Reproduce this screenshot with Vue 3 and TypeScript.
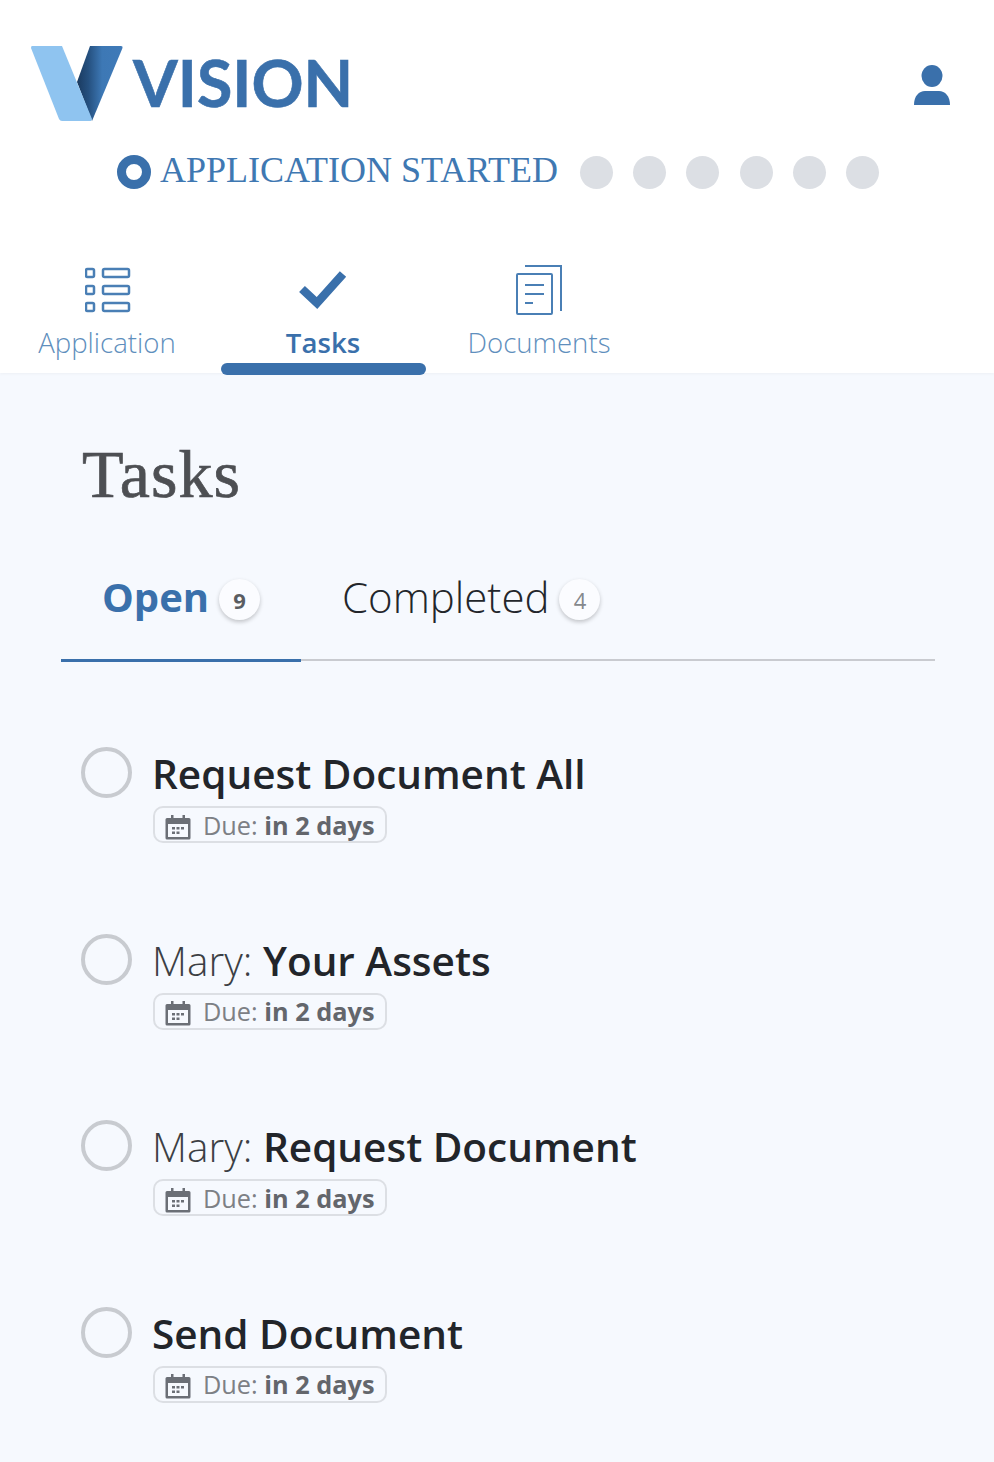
<script setup lang="ts">
interface Task {
  owner?: string
  title: string
}

const tasks: Task[] = [
  { title: 'Request Document All' },
  { owner: 'Mary', title: 'Your Assets' },
  { owner: 'Mary', title: 'Request Document' },
  { title: 'Send Document' },
]

const steps = [1, 2, 3, 4, 5, 6]
</script>

<template>
  <div class="page">
    <header class="top">
      <div class="brand-row">
        <div class="brand">
          <svg class="logo" viewBox="0 0 92 76" width="92" height="76">
            <defs>
              <linearGradient id="fold" x1="0" y1="0" x2="1" y2="0">
                <stop offset="0" stop-color="#1a3a5f" />
                <stop offset="0.25" stop-color="#25507f" />
                <stop offset="0.55" stop-color="#3d78b5" />
                <stop offset="1" stop-color="#3f7ab8" />
              </linearGradient>
            </defs>
            <path d="M59 0 H90 Q92 0 91.500 2 L61 75 L46 36 Z" fill="url(#fold)" />
            <path d="M1 0 H31 L61 73 L60 75 H31 Q29 75 28 73 L0 2 Q0 0 1 0 Z" fill="#8fc4f0" />
          </svg>
          <span class="wordmark">VISION</span>
        </div>
        <svg class="user" viewBox="0 0 36 40" width="36" height="40">
          <ellipse cx="18" cy="11" rx="10.500" ry="11" fill="#3a70ab" />
          <path d="M0 40 C0 31 5 26 11 26 H25 C31 26 36 31 36 40 Z" fill="#3a70ab" />
        </svg>
      </div>

      <div class="stepper">
        <span class="ring"></span>
        <span class="status">APPLICATION STARTED</span>
        <span v-for="s in steps" :key="s" class="dot"></span>
      </div>

      <nav class="nav">
        <a class="nav-item">
          <svg class="grid-icon" viewBox="0 0 46 46" width="46" height="46" fill="none" stroke="#4a7fb5" stroke-width="2.500">
            <rect x="1" y="2" width="8" height="8" rx="1.500" />
            <rect x="1" y="19" width="8" height="8" rx="1.500" />
            <rect x="1" y="36" width="8" height="8" rx="1.500" />
            <rect x="18" y="2" width="26" height="8" rx="1.500" />
            <rect x="18" y="19" width="26" height="8" rx="1.500" />
            <rect x="18" y="36" width="26" height="8" rx="1.500" />
          </svg>
          <span>Application</span>
        </a>
        <a class="nav-item active">
          <svg viewBox="0 0 48 40" width="48" height="40">
            <path d="M3 19 L18 33 L44 4" fill="none" stroke="#3a70ab" stroke-width="8.500" stroke-linejoin="miter" />
          </svg>
          <span>Tasks</span>
        </a>
        <a class="nav-item">
          <svg viewBox="0 0 46 50" width="46" height="50" fill="none" stroke="#4a7fb5" stroke-width="2">
            <path d="M9 1 H45 V46" />
            <rect x="1" y="9" width="35" height="40" rx="1" />
            <path d="M9 20 H28 M9 29 H28 M9 38 H17" />
          </svg>
          <span>Documents</span>
        </a>
      </nav>
    </header>

    <main class="panel">
      <h1 class="title">Tasks</h1>

      <div class="tabs">
        <div class="tab open">
          <span>Open</span>
          <span class="count strong">9</span>
        </div>
        <div class="tab">
          <span>Completed</span>
          <span class="count">4</span>
        </div>
      </div>

      <ul class="list">
        <li v-for="task in tasks" :key="task.title" class="task">
          <span class="check"></span>
          <div class="body">
            <div class="name">
              <span v-if="task.owner" class="owner">{{ task.owner }}: </span>{{ task.title }}
            </div>
            <div class="due">
              <svg viewBox="0 0 26 26" width="26" height="26" fill="#6b6f76">
                <path fill-rule="evenodd" d="M6 1 H8.500 V4 H17.500 V1 H20 V4 H24 Q25.500 4 25.500 5.500 V24 Q25.500 25.500 24 25.500 H2 Q0.500 25.500 0.500 24 V5.500 Q0.500 4 2 4 H6 Z M3 10 V23 H23 V10 Z" />
                <rect x="7" y="13" width="3" height="2.500" />
                <rect x="11.500" y="13" width="3" height="2.500" />
                <rect x="16" y="13" width="3" height="2.500" />
                <rect x="7" y="17.500" width="3" height="2.500" />
                <rect x="11.500" y="17.500" width="3" height="2.500" />
              </svg>
              <span>Due: <b>in 2 days</b></span>
            </div>
          </div>
        </li>
      </ul>
    </main>
  </div>
</template>

<style>
html,
body {
  margin: 0;
  background: #f6f9fe;
}
</style>

<style scoped>
.page {
  width: 994px;
  height: 1462px;
  overflow: hidden;
  font-family: 'Open Sans', 'Noto Sans', sans-serif;
  background: #f6f9fe;
}

.top {
  background: #fff;
  height: 373px;
  box-shadow: 0 1px 3px rgba(0, 0, 0, 0.04);
}

.brand-row {
  display: flex;
  justify-content: space-between;
  padding: 46px 44px 0 31px;
  height: 84px;
}

.brand {
  display: flex;
  align-items: flex-start;
}

.logo {
  display: block;
}

.wordmark {
  margin: 0 0 0 10px;
  font-family: Lato, sans-serif;
  font-weight: 700;
  font-size: 64.500px;
  line-height: 72px;
  color: #3a70ab;
  -webkit-text-stroke: 0.6px #3a70ab;
}

.user {
  margin-top: 19px;
}

.stepper {
  display: flex;
  align-items: center;
  margin-top: 25px;
  padding-left: 117px;
  height: 34px;
}

.ring {
  width: 34px;
  height: 34px;
  box-sizing: border-box;
  border: 9px solid #3a70ab;
  border-radius: 50%;
}

.status {
  margin: -4px 5px 0 9px;
  font-family: 'Liberation Serif', serif;
  font-size: 36px;
  line-height: 34px;
  color: #3f78b2;
  width: 415px;
  white-space: nowrap;
}

.dot {
  width: 33px;
  height: 33px;
  margin-right: 20.200px;
  border-radius: 50%;
  background: #dcdfe4;
}

.nav {
  display: grid;
  grid-template-columns: repeat(3, 216px);
  margin: 76px 0 0 -1px;
}

.nav-item {
  position: relative;
  display: flex;
  flex-direction: column;
  align-items: center;
  height: 108px;
  font-size: 27.600px;
  font-weight: 300;
  color: #5f8fbd;
}

.nav-item svg {
  height: 50px;
  display: block;
}

.nav-item .grid-icon {
  margin-left: 2px;
}

.nav-item span {
  margin-top: 9px;
  line-height: 37px;
}

.nav-item.active {
  color: #3a70ab;
  font-weight: 600;
}

.nav-item.active::after {
  content: '';
  position: absolute;
  left: 6px;
  right: 5px;
  bottom: -2px;
  height: 12px;
  border-radius: 6px;
  background: #3a70ab;
}

.panel {
  padding: 65px 59px 0 61px;
}

.title {
  margin: 0 0 0 21px;
  font-family: 'Liberation Serif', serif;
  font-weight: 400;
  font-size: 68px;
  letter-spacing: 1px;
  line-height: 72px;
  color: #4d4f53;
  -webkit-text-stroke: 0.7px #4d4f53;
}

.tabs {
  display: flex;
  margin-top: 62px;
  height: 87px;
  border-bottom: 2px solid #c9cbd0;
}

.tab {
  display: flex;
  align-items: flex-start;
  gap: 10px;
  height: 87px;
  font-size: 42px;
  line-height: 50px;
  color: #23262b;
  font-weight: 300;
}

.tab.open {
  box-sizing: content-box;
  width: 199px;
  padding-left: 41px;
  margin-right: 41px;
  font-size: 40px;
  font-weight: 700;
  color: #3a70ab;
  border-bottom: 3px solid #3a70ab;
  height: 87px;
}

.count {
  flex: none;
  width: 41px;
  height: 41px;
  margin-top: 7px;
  border-radius: 50%;
  background: #fbfcff;
  box-shadow: 0 2px 4px rgba(0, 0, 0, 0.22);
  font-size: 22px;
  line-height: 42px;
  text-align: center;
  color: #85888d;
  font-weight: 400;
}

.count.strong {
  color: #5a5d62;
  font-weight: 700;
}

.list {
  list-style: none;
  margin: 86px 0 0;
  padding: 0 0 0 20px;
}

.task {
  display: flex;
  gap: 21px;
  height: 186.670px;
}

.check {
  flex: none;
  width: 51px;
  height: 51px;
  box-sizing: border-box;
  border: 4px solid #c8cbd0;
  border-radius: 50%;
}

.name {
  margin-left: -1px;
  font-size: 40.500px;
  font-weight: 600;
  line-height: 54px;
  color: #22252a;
  white-space: nowrap;
}

.owner {
  font-weight: 300;
  color: #3c3f44;
}

.due {
  display: flex;
  align-items: center;
  gap: 12px;
  box-sizing: border-box;
  width: 234px;
  height: 37px;
  margin-top: 5px;
  padding-left: 10px;
  border: 2px solid #dcdfe4;
  border-radius: 10px;
  font-size: 25.300px;
  color: #7d8085;
  white-space: nowrap;
}

.due svg {
  flex: none;
  margin-top: 4px;
}

.due b {
  font-weight: 700;
  color: #63666c;
}
</style>
